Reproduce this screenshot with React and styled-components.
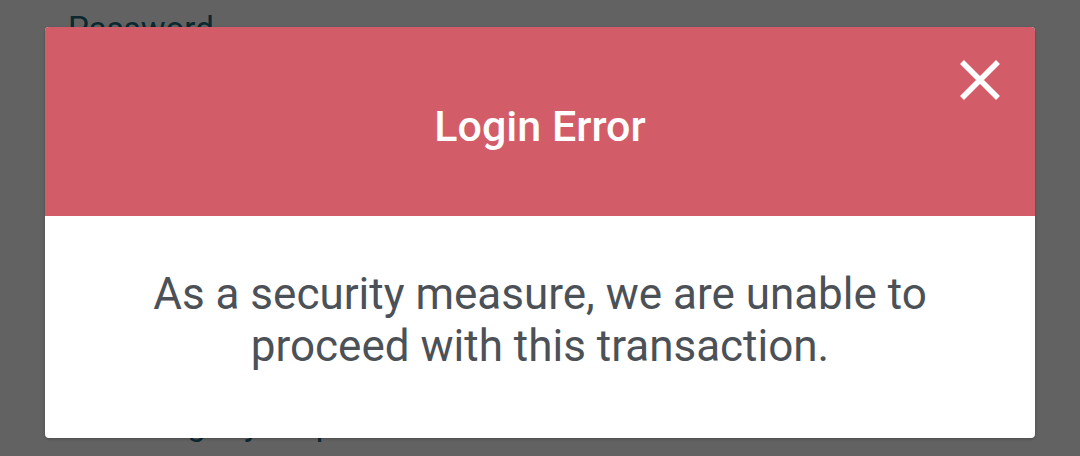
import React from 'react';
import styled, { createGlobalStyle } from 'styled-components';

const GlobalStyle = createGlobalStyle`
  html, body {
    margin: 0;
    padding: 0;
    background: #ffffff;
    font-family: Roboto, "Noto Sans", sans-serif;
  }
  #root {
    width: 1080px;
    height: 456px;
    overflow: hidden;
  }
`;

const Page = styled.div`
  position: relative;
  width: 1080px;
  height: 456px;
  overflow: hidden;
  background: #f4f6f7;
`;

const Form = styled.div`
  display: flex;
  flex-direction: column;
  padding: 10px 0 0 68px;
`;

const FieldLabel = styled.div`
  font-size: 33px;
  color: #1f6577;
  line-height: 38px;
`;

const ForgotLink = styled.div`
  margin: 357px 0 0 72px;
  font-size: 33px;
  color: #1f6577;
  line-height: 38px;
`;

const Overlay = styled.div`
  position: absolute;
  inset: 0;
  background: rgba(0, 0, 0, 0.6);
  display: flex;
  justify-content: center;
  padding-top: 27px;
  box-sizing: border-box;
`;

const Modal = styled.div`
  width: 990px;
  height: 411px;
  background: #ffffff;
  border-radius: 4px;
  overflow: hidden;
  display: flex;
  flex-direction: column;
  box-shadow: 0 1px 3px rgba(0, 0, 0, 0.25);
`;

const Header = styled.div`
  position: relative;
  height: 189px;
  background: #d35c69;
  display: flex;
  align-items: center;
  justify-content: center;
`;

const Title = styled.h2`
  margin: 0;
  font-size: 43px;
  font-weight: 500;
  color: #ffffff;
  padding-top: 8px;
`;

const CloseButton = styled.button`
  position: absolute;
  top: 28px;
  right: 30px;
  width: 50px;
  height: 50px;
  border: none;
  background: transparent;
  padding: 0;
  cursor: pointer;
  display: flex;
  align-items: center;
  justify-content: center;
`;

const Body = styled.div`
  flex: 1;
  display: flex;
  align-items: center;
  justify-content: center;
  padding: 0 40px 14px;
`;

const Message = styled.p`
  margin: 0;
  font-size: 44px;
  line-height: 52px;
  color: #4b5157;
  text-align: center;
`;

export default function App() {
  return (
    <>
      <GlobalStyle />
      <Page>
        <Form>
          <FieldLabel>Password</FieldLabel>
          <ForgotLink>Forgot your password?</ForgotLink>
        </Form>
        <Overlay>
          <Modal>
            <Header>
              <Title>Login Error</Title>
              <CloseButton aria-label="Close">
                <svg width="42" height="42" viewBox="0 0 42 42">
                  <path d="M3 3 L39 39 M39 3 L3 39" stroke="#ffffff" strokeWidth="5.5" strokeLinecap="butt" />
                </svg>
              </CloseButton>
            </Header>
            <Body>
              <Message>
                As a security measure, we are unable to
                <br />
                proceed with this transaction.
              </Message>
            </Body>
          </Modal>
        </Overlay>
      </Page>
    </>
  );
}
